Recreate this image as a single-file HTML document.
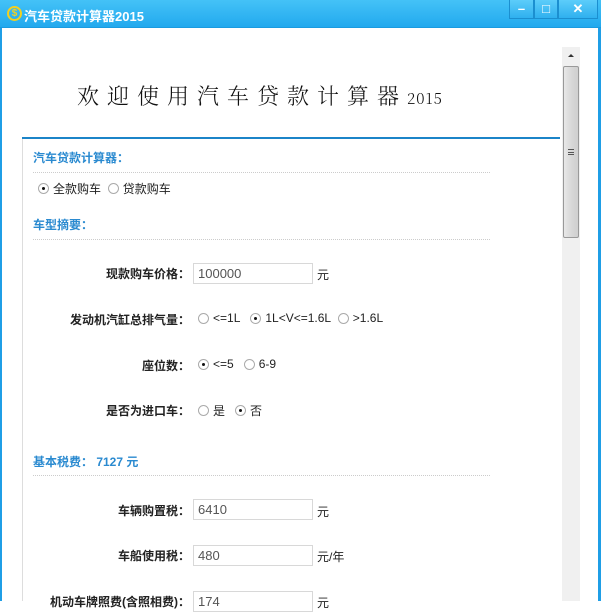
<!DOCTYPE html>
<html><head><meta charset="utf-8"><style>
*{margin:0;padding:0;box-sizing:border-box}
body{width:601px;height:601px;overflow:hidden;background:#fff;font-family:"Liberation Sans","Microsoft YaHei","Noto Sans CJK SC",sans-serif;font-size:12px;color:#222;position:relative}
.tb{position:absolute;left:0;top:0;width:601px;height:28px;background:linear-gradient(#44c2f7,#22a9ee);border-bottom:1px solid #1a9be0}
.tb .t{position:absolute;left:24px;top:6px;color:#fff;font-weight:bold;font-size:13px;font-family:"Liberation Sans","Noto Sans CJK SC",sans-serif}
.logo{position:absolute;left:7px;top:6px;width:15px;height:15px;border:2px solid #f2d020;border-radius:50%;color:#f2d020;font-size:10px;font-weight:bold;line-height:11px;text-align:center}
.btn{position:absolute;top:0;height:19px;border:1px solid #1b8fd0;border-top:none;background:linear-gradient(#5ccdfa,#2fb0ef);color:#fff;text-align:center;font-size:13px;line-height:18px;font-weight:bold}
.lb{position:absolute;left:0;top:28px;width:2px;height:573px;background:#1f9ee6}
.rb{position:absolute;right:0;top:28px;width:3px;height:573px;background:#1f9ee6}
.sb{position:absolute;left:562px;top:47px;width:18px;height:554px;background:#f0f0f0}
.thumb{position:absolute;left:563px;top:66px;width:16px;height:172px;border:1px solid #999;border-radius:2px;background:linear-gradient(90deg,#e8e8e8,#d6d6d6 60%,#cfcfcf)}
.head{position:absolute;left:77px;top:80px;font-family:"Noto Serif CJK SC",serif;font-weight:300;font-size:22px;letter-spacing:8px;color:#111}
.bl{position:absolute;left:22px;top:137px;width:538px;height:2px;background:#1b84c8}
.pl{position:absolute;left:22px;top:139px;width:1px;height:462px;background:#ddd}
.sec{position:absolute;left:33px;color:#2a8ad0;font-weight:bold}
.dot{position:absolute;left:33px;width:457px;border-top:1px dotted #ccc}
.r{position:absolute;display:flex;align-items:center}
.rd{display:inline-block;width:11px;height:11px;border:1px solid #aaa;border-radius:50%;margin-right:4px;position:relative;background:#fff}
.rd.on:after{content:"";position:absolute;left:3px;top:3px;width:3px;height:3px;background:#111;border-radius:50%}
.lab{position:absolute;right:411px;font-weight:bold;white-space:nowrap}
.inp{position:absolute;left:193px;width:120px;height:21px;border:1px solid #d8d8d8;color:#555;font-size:13px;padding:2px 4px;line-height:15px}
.u{position:absolute;left:317px}
</style></head><body>
<div class="tb"><div class="logo">$</div><div class="t">汽车贷款计算器2015</div>
<div class="btn" style="left:509px;width:25px">–</div>
<div class="btn" style="left:534px;width:24px">□</div>
<div class="btn" style="left:558px;width:40px">✕</div></div>
<div class="lb"></div><div class="rb"></div>
<div class="sb"><div style="position:absolute;left:6px;top:7px;border:3px solid transparent;border-bottom:3px solid #333;border-top:none;width:0"></div></div>
<div class="thumb"><div style="position:absolute;left:4px;top:82px;width:6px;height:6px;border-top:1px solid #555;border-bottom:1px solid #555"><div style="margin-top:2px;border-top:1px solid #555"></div></div></div>
<div class="head">欢迎使用汽车贷款计算器<span style="font-size:15px;letter-spacing:1px">2015</span></div>
<div class="bl"></div><div class="pl"></div>
<div class="sec" style="top:149px">汽车贷款计算器：</div>
<div class="dot" style="top:172px"></div>
<div class="r" style="left:38px;top:180px"><span class="rd on"></span><b style="font-weight:normal">全款购车</b>&nbsp;&nbsp;<span class="rd"></span>贷款购车</div>
<div class="sec" style="top:216px">车型摘要：</div>
<div class="dot" style="top:239px"></div>
<div class="lab" style="top:265px">现款购车价格：</div><div class="inp" style="top:263px">100000</div><div class="u" style="top:266px">元</div>
<div class="lab" style="top:311px">发动机汽缸总排气量：</div>
<div class="r" style="left:198px;top:311px"><span class="rd"></span>&lt;=1L&nbsp;&nbsp;&nbsp;<span class="rd on"></span>1L&lt;V&lt;=1.6L&nbsp;&nbsp;<span class="rd"></span>&gt;1.6L</div>
<div class="lab" style="top:357px">座位数：</div>
<div class="r" style="left:198px;top:357px"><span class="rd on"></span>&lt;=5&nbsp;&nbsp;&nbsp;<span class="rd"></span>6-9</div>
<div class="lab" style="top:402px">是否为进口车：</div>
<div class="r" style="left:198px;top:402px"><span class="rd"></span>是&nbsp;&nbsp;&nbsp;<span class="rd on"></span>否</div>
<div class="sec" style="top:453px">基本税费： 7127 元</div>
<div class="dot" style="top:475px"></div>
<div class="lab" style="top:502px">车辆购置税：</div><div class="inp" style="top:499px">6410</div><div class="u" style="top:503px">元</div>
<div class="lab" style="top:547px">车船使用税：</div><div class="inp" style="top:545px">480</div><div class="u" style="top:548px">元/年</div>
<div class="lab" style="top:593px">机动车牌照费(含照相费)：</div><div class="inp" style="top:591px">174</div><div class="u" style="top:594px">元</div>
</body></html>
